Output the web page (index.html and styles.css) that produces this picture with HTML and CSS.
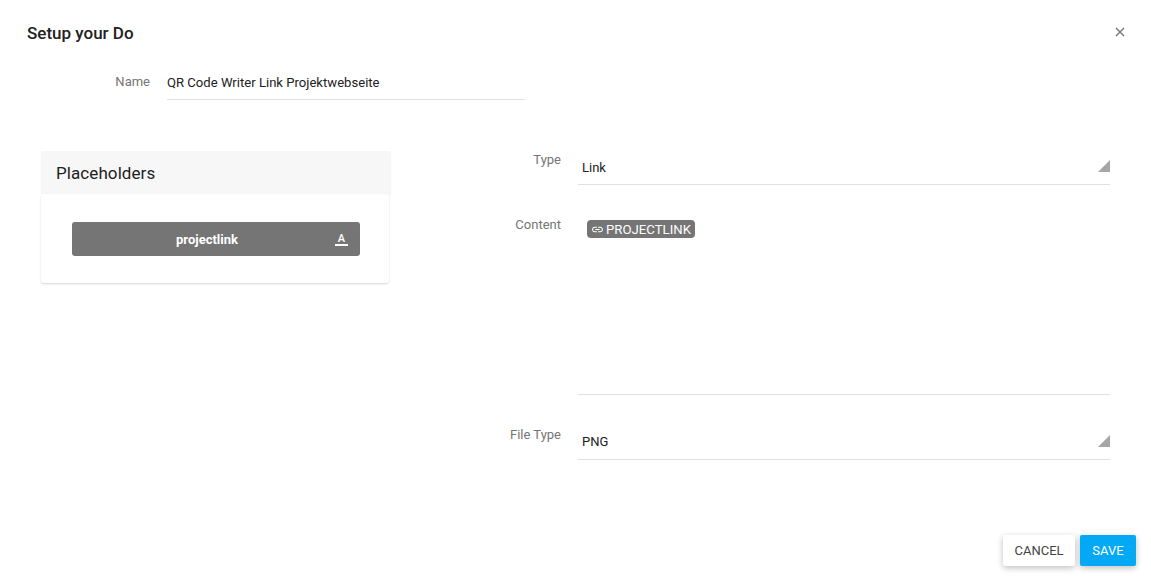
FILE: index.html
```html
<!DOCTYPE html>
<html lang="en">
<head>
    <meta charset="UTF-8">
    <meta name="viewport" content="width=device-width, initial-scale=1.0">
    <title>Setup your Do</title>
    <link rel="stylesheet" href="styles.css">
</head>
<body>
    <div class="dialog">
        <div class="dialog-header">
            <h1 class="dialog-title">Setup your Do</h1>
            <svg class="close-icon" width="10" height="10" viewBox="0 0 10 10">
                <path d="M1 1 L9 9 M9 1 L1 9" stroke="#757575" stroke-width="1.4" fill="none"/>
            </svg>
        </div>

        <div class="name-row">
            <span class="field-label name-label">Name</span>
            <div class="name-input">QR Code Writer Link Projektwebseite</div>
        </div>

        <div class="dialog-body">
            <div class="panel">
                <div class="panel-title">Placeholders</div>
                <div class="panel-body">
                    <div class="placeholder-btn">
                        <span>projectlink</span>
                        <span class="type-icon">A</span>
                    </div>
                </div>
            </div>

            <div class="form">
                <div class="form-row type-row">
                    <span class="field-label">Type</span>
                    <div class="select">Link<i class="select-arrow"></i></div>
                </div>
                <div class="form-row content-row">
                    <span class="field-label">Content</span>
                    <div class="content-box">
                        <span class="chip">
                            <svg width="13" height="13" viewBox="0 0 24 24">
                                <path fill="#fff" d="M3.9 12c0-1.71 1.39-3.1 3.1-3.1h4V7H7c-2.76 0-5 2.24-5 5s2.24 5 5 5h4v-1.9H7c-1.71 0-3.1-1.39-3.1-3.1zM8 13h8v-2H8v2zm9-6h-4v1.9h4c1.71 0 3.1 1.39 3.1 3.1s-1.39 3.1-3.1 3.1h-4V17h4c2.76 0 5-2.24 5-5s-2.24-5-5-5z"/>
                            </svg>
                            PROJECTLINK
                        </span>
                    </div>
                </div>
                <div class="form-row file-row">
                    <span class="field-label">File Type</span>
                    <div class="select">PNG<i class="select-arrow"></i></div>
                </div>
            </div>
        </div>

        <div class="dialog-footer">
            <button class="btn btn-cancel">CANCEL</button>
            <button class="btn btn-save">SAVE</button>
        </div>
    </div>
</body>
</html>
```

FILE: styles.css
```css
html, body {
    margin: 0;
    height: 100%;
    background: #fff;
    font-family: Roboto, "Liberation Sans", sans-serif;
    overflow: hidden;
}

.dialog {
    display: flex;
    flex-direction: column;
    box-sizing: border-box;
    height: 581px;
    padding: 22px 15px 15px 27px;
}

.dialog-header {
    display: flex;
    justify-content: space-between;
    align-items: center;
    height: 22px;
    padding-right: 11px;
}

.dialog-title {
    margin: 0;
    font-size: 17px;
    font-weight: 500;
    color: #212121;
}

.close-icon {
    margin-top: -2px;
}

.field-label {
    font-size: 13px;
    line-height: 16px;
    color: #757575;
    text-align: right;
}

.name-row {
    display: flex;
    margin-top: 30px;
}

.name-label {
    width: 123px;
}

.name-input {
    width: 358px;
    height: 25px;
    margin-left: 17px;
    border-bottom: 1px solid #e0e0e0;
    font-size: 13.1px;
    line-height: 17px;
    color: #212121;
}

.dialog-body {
    display: flex;
    margin-top: 51px;
    padding-left: 14px;
}

.panel {
    width: 350px;
    height: 132px;
    flex-shrink: 0;
}

.panel-title {
    height: 43px;
    padding-left: 15px;
    background: #f7f7f7;
    border-radius: 2px;
    box-shadow: 0 1px 2px rgba(0, 0, 0, 0.05);
    font-size: 17px;
    letter-spacing: 0.08px;
    line-height: 44px;
    color: #212121;
}

.panel-body {
    position: relative;
    width: 348px;
    height: 89px;
    box-sizing: border-box;
    padding: 28px 29px 0 31px;
    background: #fff;
    border-radius: 3px;
    box-shadow: 0 1px 2px rgba(0, 0, 0, 0.16);
}

.placeholder-btn {
    position: relative;
    height: 34px;
    box-sizing: border-box;
    padding-right: 18px;
    background: #757575;
    border-radius: 3px;
    font-size: 13px;
    font-weight: 700;
    line-height: 35px;
    text-align: center;
    color: #fff;
}

.type-icon {
    position: absolute;
    right: 12px;
    top: 11px;
    width: 13px;
    height: 11px;
    border-bottom: 2px solid #fff;
    font-size: 11px;
    font-weight: 500;
    line-height: 12px;
}

.form {
    flex: 1;
    margin-left: 110px;
    margin-right: 26px;
}

.form-row {
    display: flex;
}

.form-row .field-label {
    width: 60px;
    flex-shrink: 0;
    margin-right: 17px;
    white-space: nowrap;
}

.type-row {
    margin-top: 1px;
}

.select {
    position: relative;
    flex: 1;
    height: 34px;
    box-sizing: border-box;
    margin-top: -1px;
    padding: 8px 0 0 4px;
    border-bottom: 1px solid #e0e0e0;
    font-size: 13px;
    line-height: 17px;
    color: #212121;
}

.select-arrow {
    position: absolute;
    right: 0;
    top: 9px;
    width: 0;
    height: 0;
    border-left: 12px solid transparent;
    border-bottom: 12px solid #a6a6a6;
}

.content-row {
    margin-top: 32px;
}

.content-box {
    flex: 1;
    height: 174px;
    margin-top: 3px;
    padding-left: 9px;
    border-bottom: 1px solid #e0e0e0;
}

.chip {
    display: inline-flex;
    align-items: center;
    gap: 2px;
    height: 18px;
    padding: 0 4px;
    background: #757575;
    border-radius: 4px;
    font-size: 13.2px;
    color: #fff;
}

.file-row {
    margin-top: 32px;
}

.file-row .select {
    padding-top: 7px;
}

.dialog-footer {
    display: flex;
    justify-content: flex-end;
    gap: 5px;
    margin-top: auto;
}

.btn {
    height: 31px;
    padding: 0;
    border: 0;
    border-radius: 2px;
    font-family: inherit;
    font-size: 13px;
    box-shadow: 0 2px 6px rgba(0, 0, 0, 0.25);
}

.btn-cancel {
    width: 72px;
    background: #fff;
    color: #424242;
}

.btn-save {
    width: 56px;
    background: #03a9f4;
    color: #fff;
}
```
